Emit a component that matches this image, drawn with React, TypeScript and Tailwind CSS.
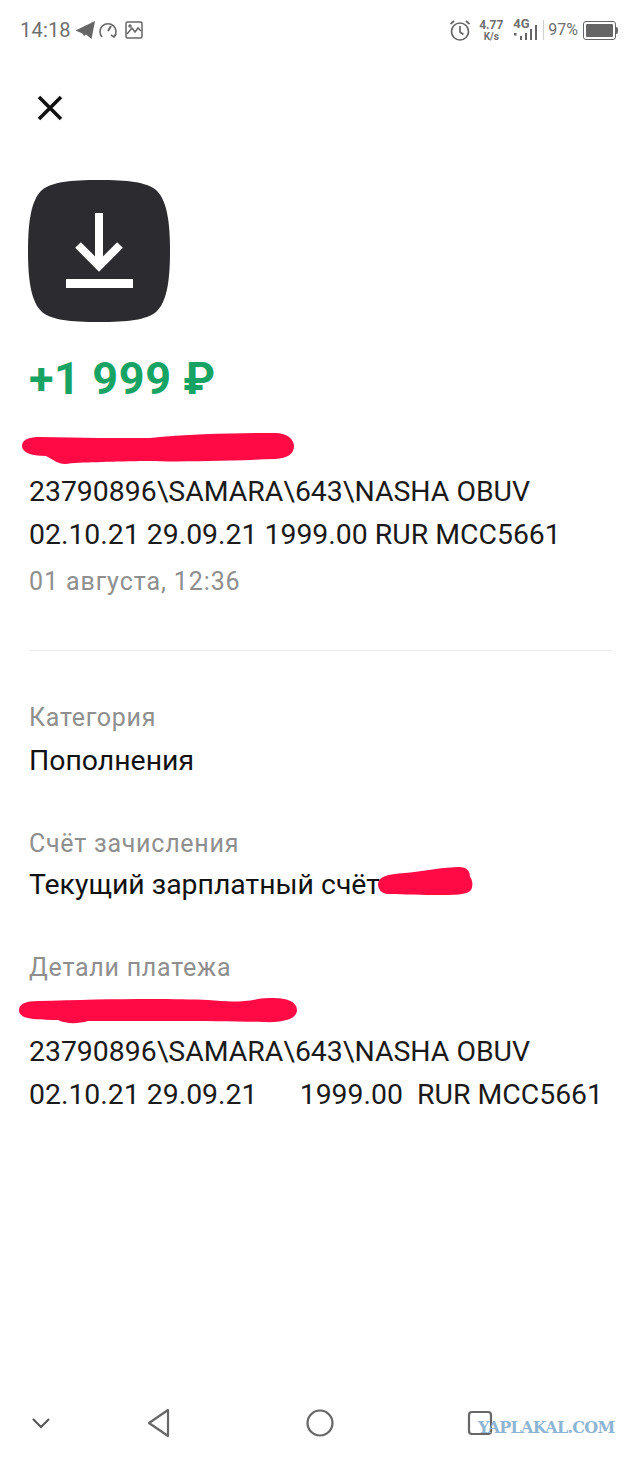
import React from 'react';

const font = "font-['Roboto',sans-serif]";

const StatusBar: React.FC = () => (
  <div className="h-[60px] pl-[20px] pr-[22px] flex items-center justify-between text-[#6f6f6f]">
    <div className="flex items-center gap-[3px]">
      <span className="text-[20px] leading-none tracking-[0.2px] mr-[1px]">14:18</span>
      <svg width="20" height="20" viewBox="0 0 20 20" fill="#666">
        <path d="M0.5 10.5 L20 1 L16.5 19 L11 14.5 L9 16 L7.5 13.5 Z" />
      </svg>
      <svg width="20" height="20" viewBox="0 0 20 20" fill="none" stroke="#666" strokeWidth="1.6">
        <path d="M4 17 A8 8 0 1 1 16 17" />
        <path d="M10 11 L13 6" strokeWidth="2" />
        <path d="M13 15 l3 2 l2 -3" />
      </svg>
      <svg width="20" height="20" viewBox="0 0 20 20" fill="none" stroke="#666" strokeWidth="1.5" className="ml-[3px]">
        <rect x="2" y="2" width="16" height="16" rx="1.5" />
        <path d="M3 14 L8 8 L11 12 L14 8 L17 11" />
        <circle cx="6" cy="6" r="1" />
      </svg>
    </div>
    <div className="flex items-center">
      <svg width="24" height="24" viewBox="0 0 24 24" fill="none" stroke="#666" strokeWidth="1.7">
        <circle cx="12" cy="13.5" r="8.5" />
        <path d="M12 8 V14 L15.5 16.5" />
        <path d="M2.5 6 L6 3 M21.5 6 L18 3" />
      </svg>
      <div className="ml-[6px] w-[26px] flex flex-col items-center text-[12px] leading-[12px] font-bold">
        <span>4.77</span>
        <span className="text-[10px] leading-[11px]">K/s</span>
      </div>
      <div className="relative ml-[9px] w-[26px] h-[24px]">
        <span className="absolute left-0 top-[-1px] text-[13px] leading-[13px] font-bold">4G</span>
        <svg width="26" height="24" viewBox="0 0 26 24" fill="#666">
          <rect x="1" y="15" width="2.5" height="2.5" />
          <rect x="7" y="18" width="2" height="4" />
          <rect x="12" y="15" width="2" height="7" />
          <rect x="17" y="11" width="2" height="11" />
          <rect x="22" y="7" width="2" height="15" />
        </svg>
      </div>
      <div className="ml-[4px] w-px h-[20px] bg-[#cfcfcf]" />
      <span className="ml-[4px] text-[16px] leading-none">97%</span>
      <div className="ml-[5px] flex items-center">
        <div className="w-[33px] h-[19px] rounded-[3px] border-[1.5px] border-[#666] p-[2px]">
          <div className="w-full h-full bg-[#666] rounded-[1px]" />
        </div>
        <div className="w-[2px] h-[7px] bg-[#666] rounded-r-sm" />
      </div>
    </div>
  </div>
);

const Blot: React.FC<{ w: number; h: number; d: string; className?: string }> = ({ w, h, d, className }) => (
  <svg width={w} height={h} viewBox={`0 0 ${w} ${h}`} className={className}>
    <path d={d} fill="#ff0a45" />
  </svg>
);

const Field: React.FC<{ label: string; children: React.ReactNode }> = ({ label, children }) => (
  <div>
    <div className="h-[36px] flex items-center text-[25px] text-[#8f8f8f] tracking-[0.75px]">{label}</div>
    {children}
  </div>
);

export default function App() {
  return (
    <div className={`w-[640px] h-[1459px] bg-white flex flex-col overflow-hidden ${font}`}>
      <StatusBar />

      <div className="h-[96px] pl-[29px] flex items-center">
        <svg width="42" height="42" viewBox="0 0 42 42" fill="none" stroke="#111" strokeWidth="3.6">
          <path d="M10 10 L32 32 M32 10 L10 32" />
        </svg>
      </div>

      <div className="pl-[28px] pr-[28px]">
        <div className="mt-[24px] w-[142px] h-[142px]">
          <svg width="142" height="142" viewBox="0 0 142 142">
            <path
              d="M71 0 C100 0 118 2 128 10 C139 20 142 42 142 71 C142 100 139 122 128 132 C118 140 100 142 71 142 C42 142 24 140 14 132 C3 122 0 100 0 71 C0 42 3 20 14 10 C24 2 42 0 71 0 Z"
              fill="#2c2c30"
            />
            <path d="M71 33 V86 M50 65 L71 86 L92 65" fill="none" stroke="#fff" strokeWidth="8" />
            <rect x="38" y="99" width="67" height="9" fill="#fff" />
          </svg>
        </div>

        <div className="mt-[28px] ml-[1px] h-[56px] flex items-center text-[45px] leading-none font-bold text-[#17a364] tracking-[0.6px]">
          +1 999 ₽
        </div>
      </div>

      <div className="pl-[20px] mt-[26px] h-[36px]">
        <Blot
          w={276}
          h={36}
          d="M2 14 C2 7 10 5 20 5 C60 6 100 6 130 6 C170 2 220 1 255 1 C268 1 274 8 274 14 C274 22 268 26 255 27 C200 29 150 30 120 29 C90 30 60 30 45 32 C38 32 32 27 26 24 C10 24 2 20 2 14 Z"
        />
      </div>

      <div className="pl-[29px] pr-[20px] mt-[2px]">
        <div className="text-[28.4px] leading-[43px] text-[#1a1a1a]">
          <div>23790896\SAMARA\643\NASHA OBUV</div>
          <div>02.10.21 29.09.21 1999.00 RUR MCC5661</div>
        </div>
        <div className="mt-[6px] h-[40px] flex items-center text-[25px] text-[#8f8f8f] tracking-[0.9px]">01 августа, 12:36</div>
        <div className="mt-[48px] mr-[8px] h-px bg-[#ececec]" />

        <div className="mt-[49px]">
          <Field label="Категория">
            <div className="mt-[4px] h-[42px] flex items-center text-[28.4px] text-[#111]">Пополнения</div>
          </Field>
        </div>

        <div className="mt-[44px]">
          <Field label="Счёт зачисления">
            <div className="mt-[2px] h-[42px] flex items-center text-[28.4px] text-[#111]">
              <span>Текущий зарплатный счёт</span>
              <Blot
                w={100}
                h={32}
                d="M3 17 C3 10 12 7 30 6 C50 4 70 0 84 0 C92 0 95 4 95 10 C98 13 98 20 96 23 C92 28 80 28 60 28 C40 28 20 27 12 27 C6 26 3 22 3 17 Z"
                className="-ml-[5px] -mt-[4px]"
              />
            </div>
          </Field>
        </div>

        <div className="mt-[44px]">
          <Field label="Детали платежа">
            <div className="-ml-[11px] mt-[4px] h-[36px]">
              <Blot
                w={282}
                h={36}
                d="M1 20 C1 14 8 11 20 11 C80 9 150 8 190 10 C210 12 225 12 240 9 C255 7 279 7 279 20 C279 29 265 33 245 32 C200 31 120 31 70 31 C60 34 48 34 40 30 C15 30 1 29 1 20 Z"
              />
            </div>
          </Field>
        </div>

        <div className="mt-[4px] text-[28.4px] leading-[43px] text-[#1a1a1a] whitespace-pre">
          <div>23790896\SAMARA\643\NASHA OBUV</div>
          <div>02.10.21 29.09.21      1999.00  RUR MCC5661</div>
        </div>
      </div>

      <div className="mt-auto relative h-[72px] grid grid-cols-[80px_160px_160px_1fr] items-center">
        <svg width="20" height="14" viewBox="0 0 20 14" fill="none" stroke="#555" strokeWidth="2" className="ml-[31px]">
          <path d="M2 3 L10 11 L18 3" />
        </svg>
        <svg width="26" height="30" viewBox="0 0 26 30" fill="none" stroke="#666" strokeWidth="2.2" strokeLinejoin="round" className="ml-[66px]">
          <path d="M22 2 L3 15 L22 28 Z" />
        </svg>
        <svg width="28" height="28" viewBox="0 0 28 28" fill="none" stroke="#666" strokeWidth="2.2" className="ml-[66px]">
          <circle cx="14" cy="14" r="12.5" />
        </svg>
        <svg width="26" height="26" viewBox="0 0 26 26" fill="none" stroke="#666" strokeWidth="2.2" className="ml-[67px]">
          <rect x="2" y="2" width="22" height="22" rx="3" />
        </svg>
        <span className="absolute left-[478px] top-[33px] text-[16px] leading-none font-bold text-[#8db4d2] tracking-[-0.75px] font-['DejaVu_Serif',serif]">
          YAPLAKAL.COM
        </span>
      </div>
    </div>
  );
}
